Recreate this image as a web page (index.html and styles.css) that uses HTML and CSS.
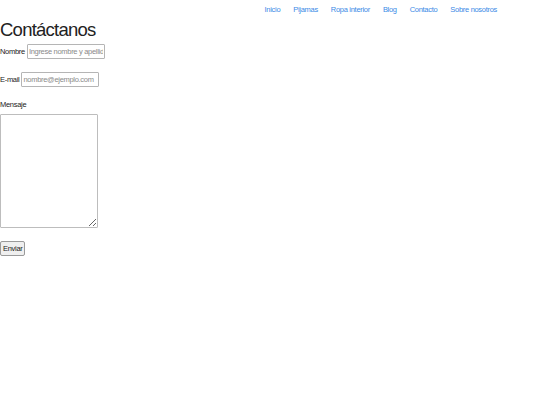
FILE: index.html
```html
<!DOCTYPE html>
<html lang="es">
<head>
<meta charset="UTF-8" />
<title>Contáctanos</title>
<link rel="stylesheet" href="styles.css">
</head>
<body>

<nav class="menu">
    <a href="#">Inicio</a>
    <a href="#">Pijamas</a>
    <a href="#">Ropa interior</a>
    <a href="#">Blog</a>
    <a href="#">Contacto</a>
    <a href="#">Sobre nosotros</a>
</nav>

<h1>Contáctanos</h1>

<form class="contact">
    <div class="row">
        <label for="nombre">Nombre</label>
        <input type="text" id="nombre" placeholder="Ingrese nombre y apellido">
    </div>
    <div class="row">
        <label for="email">E-mail</label>
        <input type="email" id="email" placeholder="nombre@ejemplo.com">
    </div>
    <div class="row stack">
        <label for="mensaje">Mensaje</label>
        <textarea id="mensaje"></textarea>
    </div>
    <div class="row">
        <button type="submit">Enviar</button>
    </div>
</form>

</body>
</html>
```

FILE: styles.css
```css
body {
    font-family: "Liberation Sans", Arial, sans-serif;
    margin: 0;
    color: #222;
    background: white;
}
.menu {
    display: flex;
    justify-content: flex-end;
    gap: 13px;
    padding: 5px 43px 0 0;
    height: 12px;
    font-size: 7.5px;
    letter-spacing: -0.3px;
}
.menu a {
    color: #3a8ae6;
    text-decoration: none;
}
h1 {
    font-size: 18.5px;
    letter-spacing: -0.75px;
    font-weight: normal;
    margin: 0;
    line-height: 26px;
}
.contact {
    display: flex;
    flex-direction: column;
    gap: 13px;
    margin-top: 1px;
}
.row {
    display: flex;
    align-items: center;
    gap: 2px;
    font-size: 7.5px;
    letter-spacing: -0.3px;
}
.row.stack {
    flex-direction: column;
    align-items: flex-start;
    gap: 5px;
}
input {
    font-family: inherit;
    font-size: 7.5px;
    letter-spacing: -0.3px;
    width: 78px;
    height: 15px;
    box-sizing: border-box;
    padding: 1px 1px;
    border: 1px solid #b5b5b5;
    border-radius: 1px;
}
input::placeholder {
    color: #8a8a8a;
}
textarea {
    width: 98px;
    height: 114px;
    box-sizing: border-box;
    border: 1px solid #bdbdbd;
    border-radius: 1px;
    margin: 0;
}
button {
    font-family: inherit;
    font-size: 7.5px;
    letter-spacing: -0.3px;
    height: 15px;
    padding: 0 2px;
    border: 1px solid #9a9a9a;
    border-radius: 2px;
    background: #efefef;
    color: #222;
}
```
